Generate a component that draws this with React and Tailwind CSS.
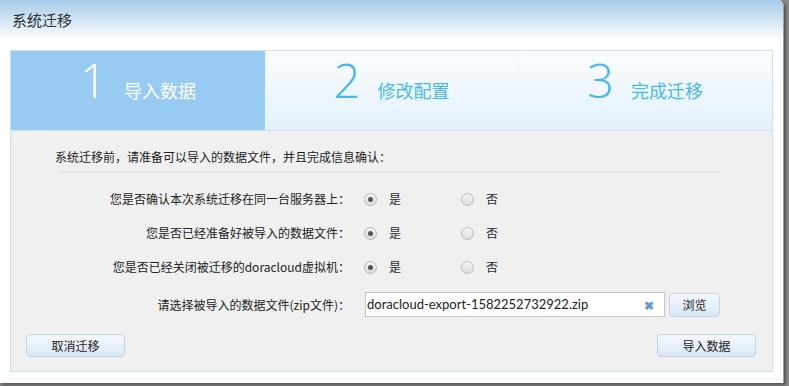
import React, { useState } from 'react';

const steps = [
  { num: '1', label: '导入数据' },
  { num: '2', label: '修改配置' },
  { num: '3', label: '完成迁移' },
];

const questions = [
  '您是否确认本次系统迁移在同一台服务器上：',
  '您是否已经准备好被导入的数据文件：',
  '您是否已经关闭被迁移的doracloud虚拟机：',
];

const Radio = ({ checked, label, onClick }) => (
  <button type="button" onClick={onClick} className="flex items-center gap-[12px]">
    <span className="w-[13px] h-[13px] rounded-full border border-[#b9b9b9] bg-gradient-to-b from-[#f4f4f4] to-[#dedede] flex items-center justify-center">
      {checked && <span className="w-[5px] h-[5px] rounded-full bg-[#555]" />}
    </span>
    <span className="text-[12px] text-[#1e2a33]">{label}</span>
  </button>
);

export default function App() {
  const [answers, setAnswers] = useState([true, true, true]);
  const [file, setFile] = useState('doracloud-export-1582252732922.zip');

  const setAnswer = (i, v) => {
    setAnswers((prev) => prev.map((a, idx) => (idx === i ? v : a)));
  };

  return (
    <div
      className="w-[789px] h-[386px] bg-[#8a8a8a] overflow-hidden"
      style={{ fontFamily: '"Noto Sans CJK SC", "Liberation Sans", sans-serif' }}
    >
      <div className="w-[784px] h-[383px] bg-white rounded-tr-[6px] rounded-tl-[3px] border-r border-[#9aa4ab] flex flex-col shadow-[2px_2px_3px_rgba(0,0,0,0.4)]">
        {/* title bar */}
        <div className="h-[40px] shrink-0 bg-gradient-to-b from-[#a6cbe8] to-white rounded-tr-[6px] rounded-tl-[3px] flex items-center px-[12px]">
          <span className="text-[15px] text-[#2a2f33]">系统迁移</span>
        </div>

        <div className="mx-[10px] mt-[10px] border border-[#c7e2e8] flex flex-col">
          {/* steps */}
          <div className="grid grid-cols-[254px_252px_1fr] h-[80px] border-b border-[#cfe3ee]">
            {steps.map((s, i) => {
              const active = i === 0;
              return (
                <div
                  key={s.num}
                  className={
                    active
                      ? 'bg-[#97cbf2] flex justify-center pt-[6px]'
                      : 'bg-gradient-to-b from-[#fbfdff] to-[#e2f1fa] flex justify-center pt-[6px] border-l border-[#eef6fb]'
                  }
                >
                  <span
                    className={`text-[47px] leading-none font-light ${active ? 'text-white' : 'text-[#45b8ec]'}`}
                    style={{ fontFamily: '"Open Sans", "Liberation Sans", sans-serif' }}
                  >
                    {s.num}
                  </span>
                  <span className={`ml-[17px] mt-[24px] text-[18px] leading-none ${active ? 'text-white' : 'text-[#45b8ec]'}`}>
                    {s.label}
                  </span>
                </div>
              );
            })}
          </div>

          {/* body */}
          <div className="bg-[#f0f0f0] pt-[18px] pb-[14px]">
            <div className="pl-[44px] text-[12px] leading-[16px] text-[#222]">
              系统迁移前，请准备可以导入的数据文件，并且完成信息确认：
            </div>
            <div className="ml-[49px] mr-[52px] mt-[6px] h-[2px] bg-[#e3e3e3]" />

            <div className="mt-[9px]">
              {questions.map((q, i) => (
                <div key={q} className="h-[34px] flex items-center">
                  <div className="w-[339px] text-right text-[12px] text-[#222]">{q}</div>
                  <div className="ml-[14px] flex items-center">
                    <Radio checked={answers[i]} label="是" onClick={() => setAnswer(i, true)} />
                    <div className="ml-[60px]">
                      <Radio checked={!answers[i]} label="否" onClick={() => setAnswer(i, false)} />
                    </div>
                  </div>
                </div>
              ))}
            </div>

            <div className="mt-[8px] h-[25px] flex items-center">
              <div className="w-[339px] text-right text-[12px] text-[#222]">请选择被导入的数据文件(zip文件)：</div>
              <div className="ml-[15px] w-[300px] h-[25px] bg-white border border-[#c4c4c4] flex items-center pl-[1px] pr-[10px]">
                <input
                  value={file}
                  onChange={(e) => setFile(e.target.value)}
                  className="flex-1 min-w-0 outline-none text-[13px] text-[#222] bg-transparent"
                  style={{ fontFamily: '"Lato", "Liberation Sans", sans-serif' }}
                />
                <button type="button" onClick={() => setFile('')} className="text-[#6a9bc9] text-[12px] font-bold leading-none">
                  ✖
                </button>
              </div>
              <button
                type="button"
                className="ml-[4px] w-[51px] h-[24px] rounded-[4px] border border-[#c0d5e6] bg-gradient-to-b from-[#f5f9fd] to-[#dae8f5] text-[12px] text-[#222]"
              >
                浏览
              </button>
            </div>

            <div className="mt-[17px] flex justify-between pl-[15px] pr-[16px]">
              <button
                type="button"
                className="w-[99px] h-[23px] rounded-[4px] border border-[#c0d5e6] bg-gradient-to-b from-[#f5f9fd] to-[#dae8f5] text-[12px] text-[#222]"
              >
                取消迁移
              </button>
              <button
                type="button"
                className="w-[99px] h-[23px] rounded-[4px] border border-[#c0d5e6] bg-gradient-to-b from-[#f5f9fd] to-[#dae8f5] text-[12px] text-[#222]"
              >
                导入数据
              </button>
            </div>
          </div>
        </div>
      </div>
    </div>
  );
}
